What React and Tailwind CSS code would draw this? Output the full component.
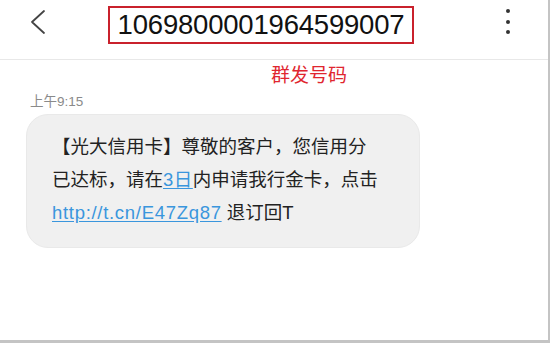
export default function App() {
  return (
    <div
      className="w-[550px] h-[343px] bg-white border-r-2 border-b-[3px] border-[#c4c4c4] overflow-hidden"
      style={{ fontFamily: '"Liberation Sans", "Noto Sans CJK SC", sans-serif' }}
    >
      {/* Header */}
      <div className="h-[60px] flex items-start border-b border-[#e8e8e8]">
        <svg className="ml-[29px] mt-[9px]" width="18" height="26" viewBox="0 0 18 26" fill="none">
          <path d="M15 2 L3 13 L15 24" stroke="#444" strokeWidth="1.8" strokeLinecap="round" strokeLinejoin="round" />
        </svg>
        <div className="ml-[61px] mt-[6px] h-[38px] w-[306px] border-2 border-[#c9212c] flex items-center justify-center text-[27.5px] tracking-[-0.2px] text-[#111] leading-none">
          1069800001964599007
        </div>
        <div className="ml-auto mr-[38px] mt-[9px] flex flex-col gap-[6.5px]">
          <div className="w-[4px] h-[4px] rounded-full bg-[#333]" />
          <div className="w-[4px] h-[4px] rounded-full bg-[#333]" />
          <div className="w-[4px] h-[4px] rounded-full bg-[#333]" />
        </div>
      </div>

      {/* Body */}
      <div className="pl-[271px] mt-[5px] text-[19px] leading-[22px] text-[#e0262f]">群发号码</div>
      <div className="pl-[30px] mt-[7px] text-[13.5px] leading-[16px] text-[#8a8a8a]">上午9:15</div>

      <div className="ml-[26px] mt-[4px] w-[394px] h-[134px] rounded-[22px] bg-[#f0f0f0] border border-[#e9e9e9] pl-[25px] pt-[15px] text-[18.5px] leading-[33px] text-[#222]">
        <div>【光大信用卡】尊敬的客户，您信用分</div>
        <div>
          已达标，请在<span className="text-[#3a96dd] underline underline-offset-2 tracking-[0.5px]">3日</span>内申请我行金卡，点击
        </div>
        <div>
          <span className="text-[#3a96dd] underline underline-offset-2 tracking-[0.7px]">http://t.cn/E47Zq87</span> 退订回T
        </div>
      </div>
    </div>
  );
}
